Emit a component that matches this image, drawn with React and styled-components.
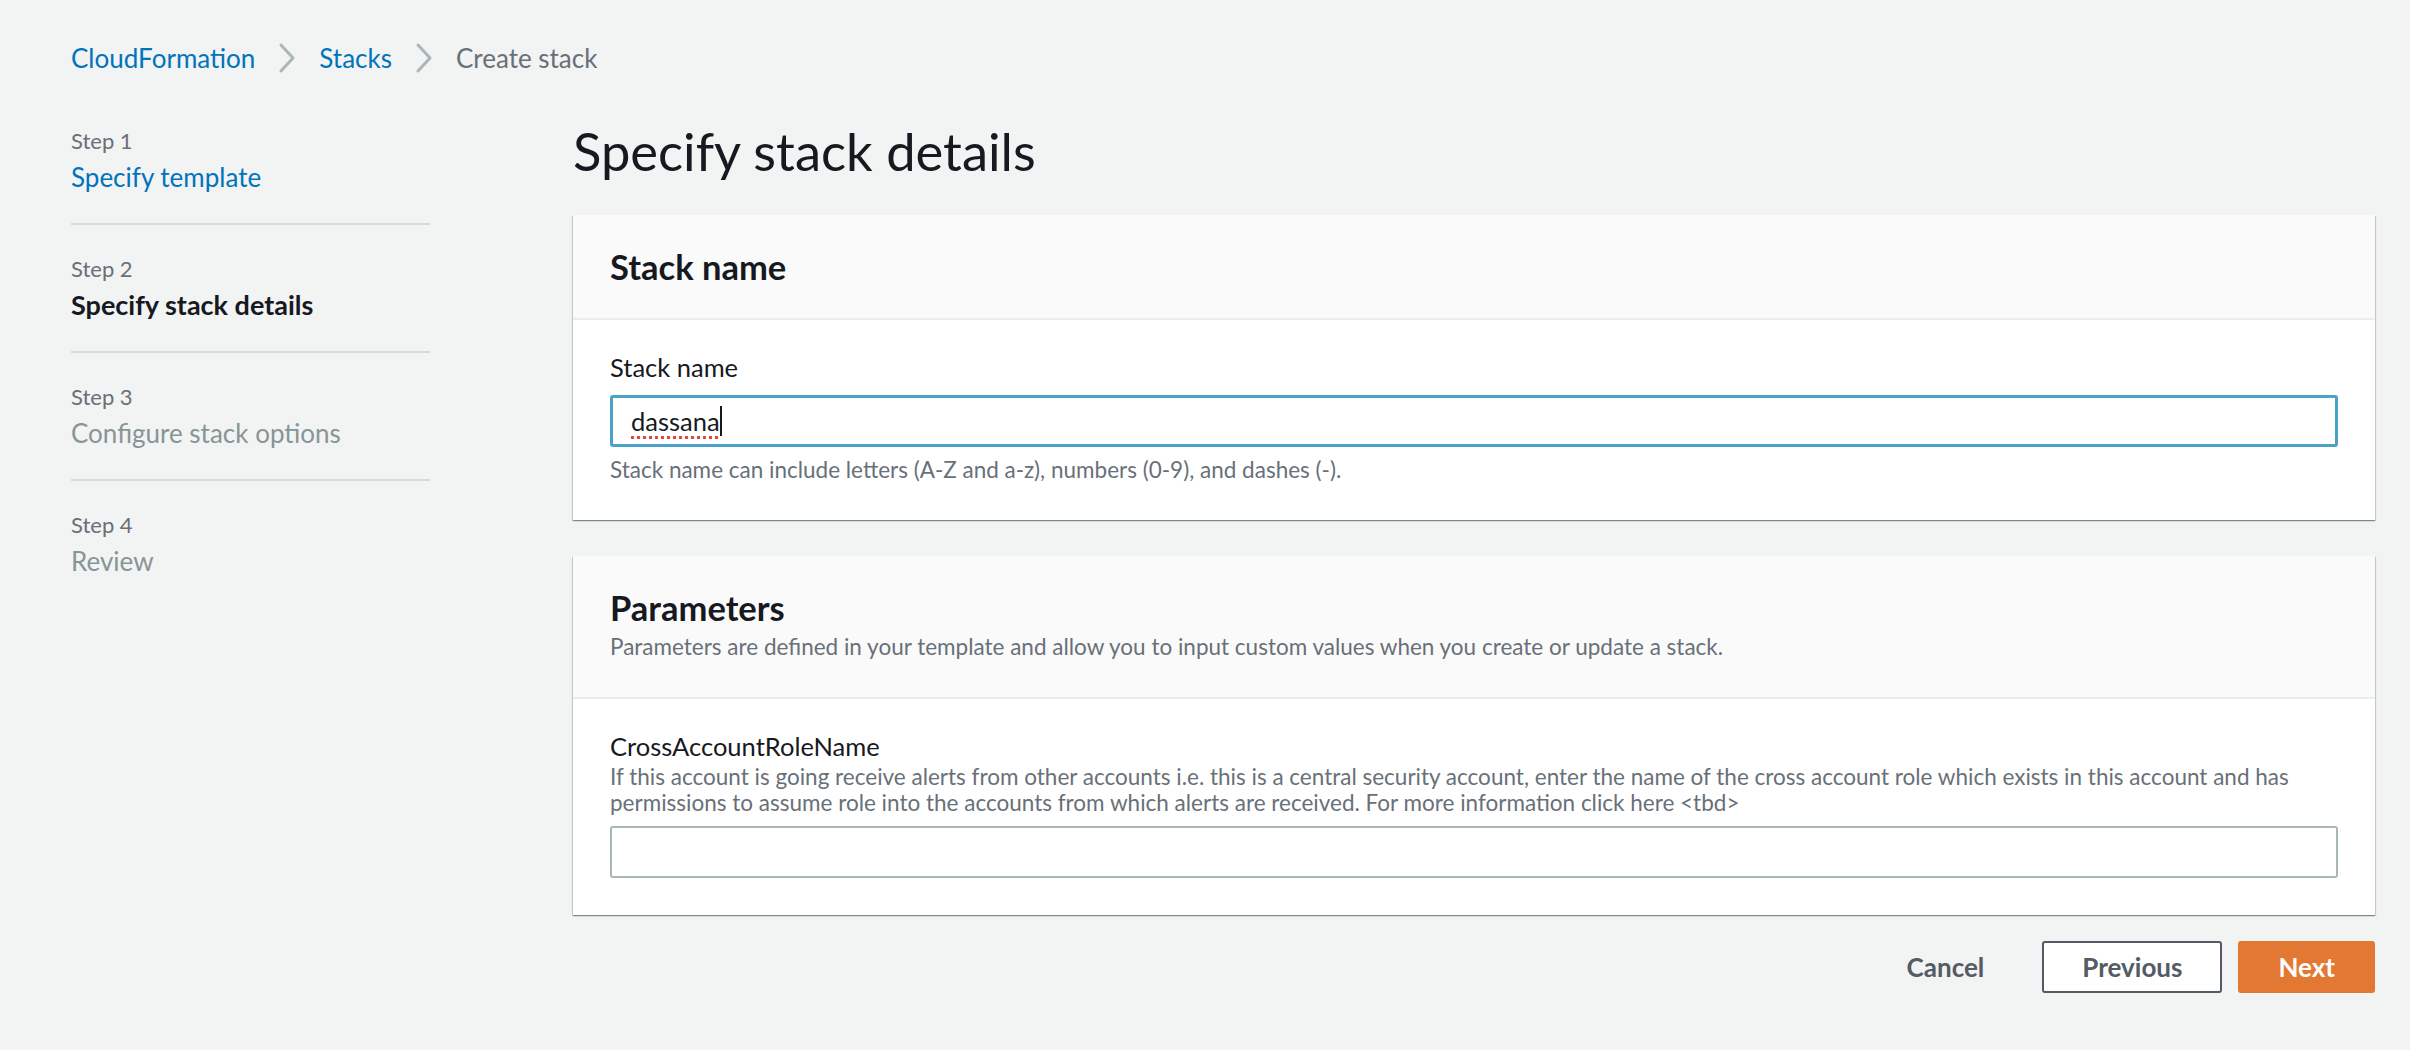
import React from "react";
import styled, { createGlobalStyle } from "styled-components";

const GlobalStyle = createGlobalStyle`
  html, body {
    margin: 0;
    padding: 0;
    background: #f2f3f3;
  }
  body {
    font-family: Lato, "Liberation Sans", sans-serif;
    color: #16191f;
  }
`;

const steps = [
  { num: "Step 1", title: "Specify template", state: "link" },
  { num: "Step 2", title: "Specify stack details", state: "active" },
  { num: "Step 3", title: "Configure stack options", state: "disabled" },
  { num: "Step 4", title: "Review", state: "disabled" },
];

const Chevron = () => (
  <svg width="18" height="32" viewBox="0 0 18 32">
    <polyline
      points="3,3 15,16 3,29"
      fill="none"
      stroke="#aab7b8"
      strokeWidth="3"
      strokeLinecap="round"
      strokeLinejoin="round"
    />
  </svg>
);

const App = () => {
  return (
    <Page>
      <GlobalStyle />
      <Breadcrumbs>
        <Crumb href="#">CloudFormation</Crumb>
        <Chevron />
        <Crumb href="#">Stacks</Crumb>
        <Chevron />
        <Crumb current>Create stack</Crumb>
      </Breadcrumbs>

      <Layout>
        <StepNav>
          {steps.map((s) => (
            <StepItem key={s.num}>
              <StepNum>{s.num}</StepNum>
              <StepTitle state={s.state}>{s.title}</StepTitle>
            </StepItem>
          ))}
        </StepNav>

        <Main>
          <Title>Specify stack details</Title>

          <Card>
            <CardHeader>
              <CardTitle>Stack name</CardTitle>
            </CardHeader>
            <CardBody>
              <FieldLabel>Stack name</FieldLabel>
              <InputBox focused>
                <Typed>dassana</Typed>
                <Caret />
              </InputBox>
              <Hint>
                Stack name can include letters (A-Z and a-z), numbers (0-9), and
                dashes (-).
              </Hint>
            </CardBody>
          </Card>

          <Card>
            <CardHeader>
              <CardTitle>Parameters</CardTitle>
              <HeaderDesc>
                Parameters are defined in your template and allow you to input
                custom values when you create or update a stack.
              </HeaderDesc>
            </CardHeader>
            <CardBody>
              <FieldLabel>CrossAccountRoleName</FieldLabel>
              <FieldDesc>
                If this account is going receive alerts from other accounts i.e.
                this is a central security account, enter the name of the cross
                account role which exists in this account and has permissions
                to assume role into the accounts from which alerts are received.
                For more information click here &lt;tbd&gt;
              </FieldDesc>
              <InputBox />
            </CardBody>
          </Card>

          <Actions>
            <Button variant="link">Cancel</Button>
            <Button variant="normal">Previous</Button>
            <Button variant="primary">Next</Button>
          </Actions>
        </Main>
      </Layout>
    </Page>
  );
};

const Page = styled.div`
  min-height: 1050px;
  box-sizing: border-box;
  padding: 34px 35px 40px 71px;
`;

const Breadcrumbs = styled.nav`
  display: flex;
  align-items: center;
  gap: 23px;
  height: 48px;
`;

const Crumb = styled.a`
  font-size: 26px;
  line-height: 48px;
  text-decoration: none;
  color: ${(p) => (p.current ? "#687078" : "#0073bb")};
`;

const Layout = styled.div`
  display: grid;
  grid-template-columns: 359px 1fr;
  column-gap: 143px;
  margin-top: 15px;
`;

const StepNav = styled.ol`
  list-style: none;
  margin: 0;
  padding: 0;
`;

const StepItem = styled.li`
  display: flex;
  flex-direction: column;
  gap: 3px;
  padding: 29px 0 28px;
  border-bottom: 2px solid #d5dbdb;

  &:last-child {
    border-bottom: none;
  }
`;

const StepNum = styled.span`
  font-size: 22px;
  line-height: 30px;
  color: #687078;
`;

const StepTitle = styled.span`
  font-size: ${(p) => (p.state === "active" ? "27px" : "26px")};
  line-height: 36px;
  font-weight: ${(p) => (p.state === "active" ? 700 : 400)};
  color: ${(p) =>
    p.state === "active" ? "#16191f" : p.state === "link" ? "#0073bb" : "#879596"};
`;

const Main = styled.main`
  display: flex;
  flex-direction: column;
`;

const Title = styled.h1`
  margin: 22px 0 32px;
  font-size: 52.5px;
  line-height: 64px;
  font-weight: 400;
  color: #16191f;
`;

const Card = styled.section`
  background: #fff;
  box-shadow: 0 1px 1px 0 rgba(0, 28, 36, 0.3),
    1px 1px 1px 0 rgba(0, 28, 36, 0.15), -1px 1px 1px 0 rgba(0, 28, 36, 0.15);
  margin-bottom: 36px;
`;

const CardHeader = styled.header`
  background: #fafafa;
  border-bottom: 2px solid #eaeded;
  padding: 32px 37px 31px;
  display: flex;
  flex-direction: column;
  gap: 4px;
`;

const CardTitle = styled.h2`
  margin: 0;
  font-size: 34.5px;
  line-height: 40px;
  font-weight: 700;
  color: #16191f;
`;

const HeaderDesc = styled.p`
  margin: 0 0 4px;
  font-size: 22.5px;
  line-height: 30px;
  color: #687078;
`;

const CardBody = styled.div`
  padding: 30px 37px 37px;
  display: flex;
  flex-direction: column;
`;

const FieldLabel = styled.label`
  font-size: 25.5px;
  line-height: 34px;
  color: #16191f;
`;

const FieldDesc = styled.p`
  margin: 1px 0 10px;
  font-size: 22.5px;
  line-height: 26px;
  color: #687078;
`;

const InputBox = styled.div`
  box-sizing: border-box;
  height: 52px;
  margin-top: ${(p) => (p.focused ? "11px" : "0")};
  border: ${(p) => (p.focused ? "3px solid #4ba2c8" : "2px solid #aab7b8")};
  border-radius: 3px;
  background: #fff;
  display: flex;
  align-items: center;
  padding: 0 ${(p) => (p.focused ? "18px" : "19px")};
  font-size: 25.5px;
  color: #16191f;
`;

const Typed = styled.span`
  text-decoration: underline dotted #e0493a;
  text-decoration-thickness: 3px;
  text-underline-offset: 5px;
`;

const Caret = styled.span`
  width: 2px;
  height: 30px;
  background: #16191f;
`;

const Hint = styled.p`
  margin: 10px 0 0;
  font-size: 22.5px;
  line-height: 26px;
  color: #687078;
`;

const Actions = styled.div`
  display: flex;
  justify-content: flex-end;
  align-items: center;
  gap: 16px;
  margin-top: -10px;
`;

const Button = styled.button`
  box-sizing: border-box;
  height: 52px;
  padding: 0 ${(p) => (p.variant === "link" ? "40px" : "38px")};
  font-family: inherit;
  font-size: 26px;
  font-weight: 700;
  border-radius: 3px;
  cursor: pointer;
  border: 2px solid
    ${(p) =>
      p.variant === "normal"
        ? "#545b64"
        : p.variant === "primary"
        ? "#e27832"
        : "transparent"};
  background: ${(p) =>
    p.variant === "primary" ? "#e27832" : p.variant === "normal" ? "#fff" : "transparent"};
  color: ${(p) => (p.variant === "primary" ? "#fff" : "#545b64")};
`;

export default App;
